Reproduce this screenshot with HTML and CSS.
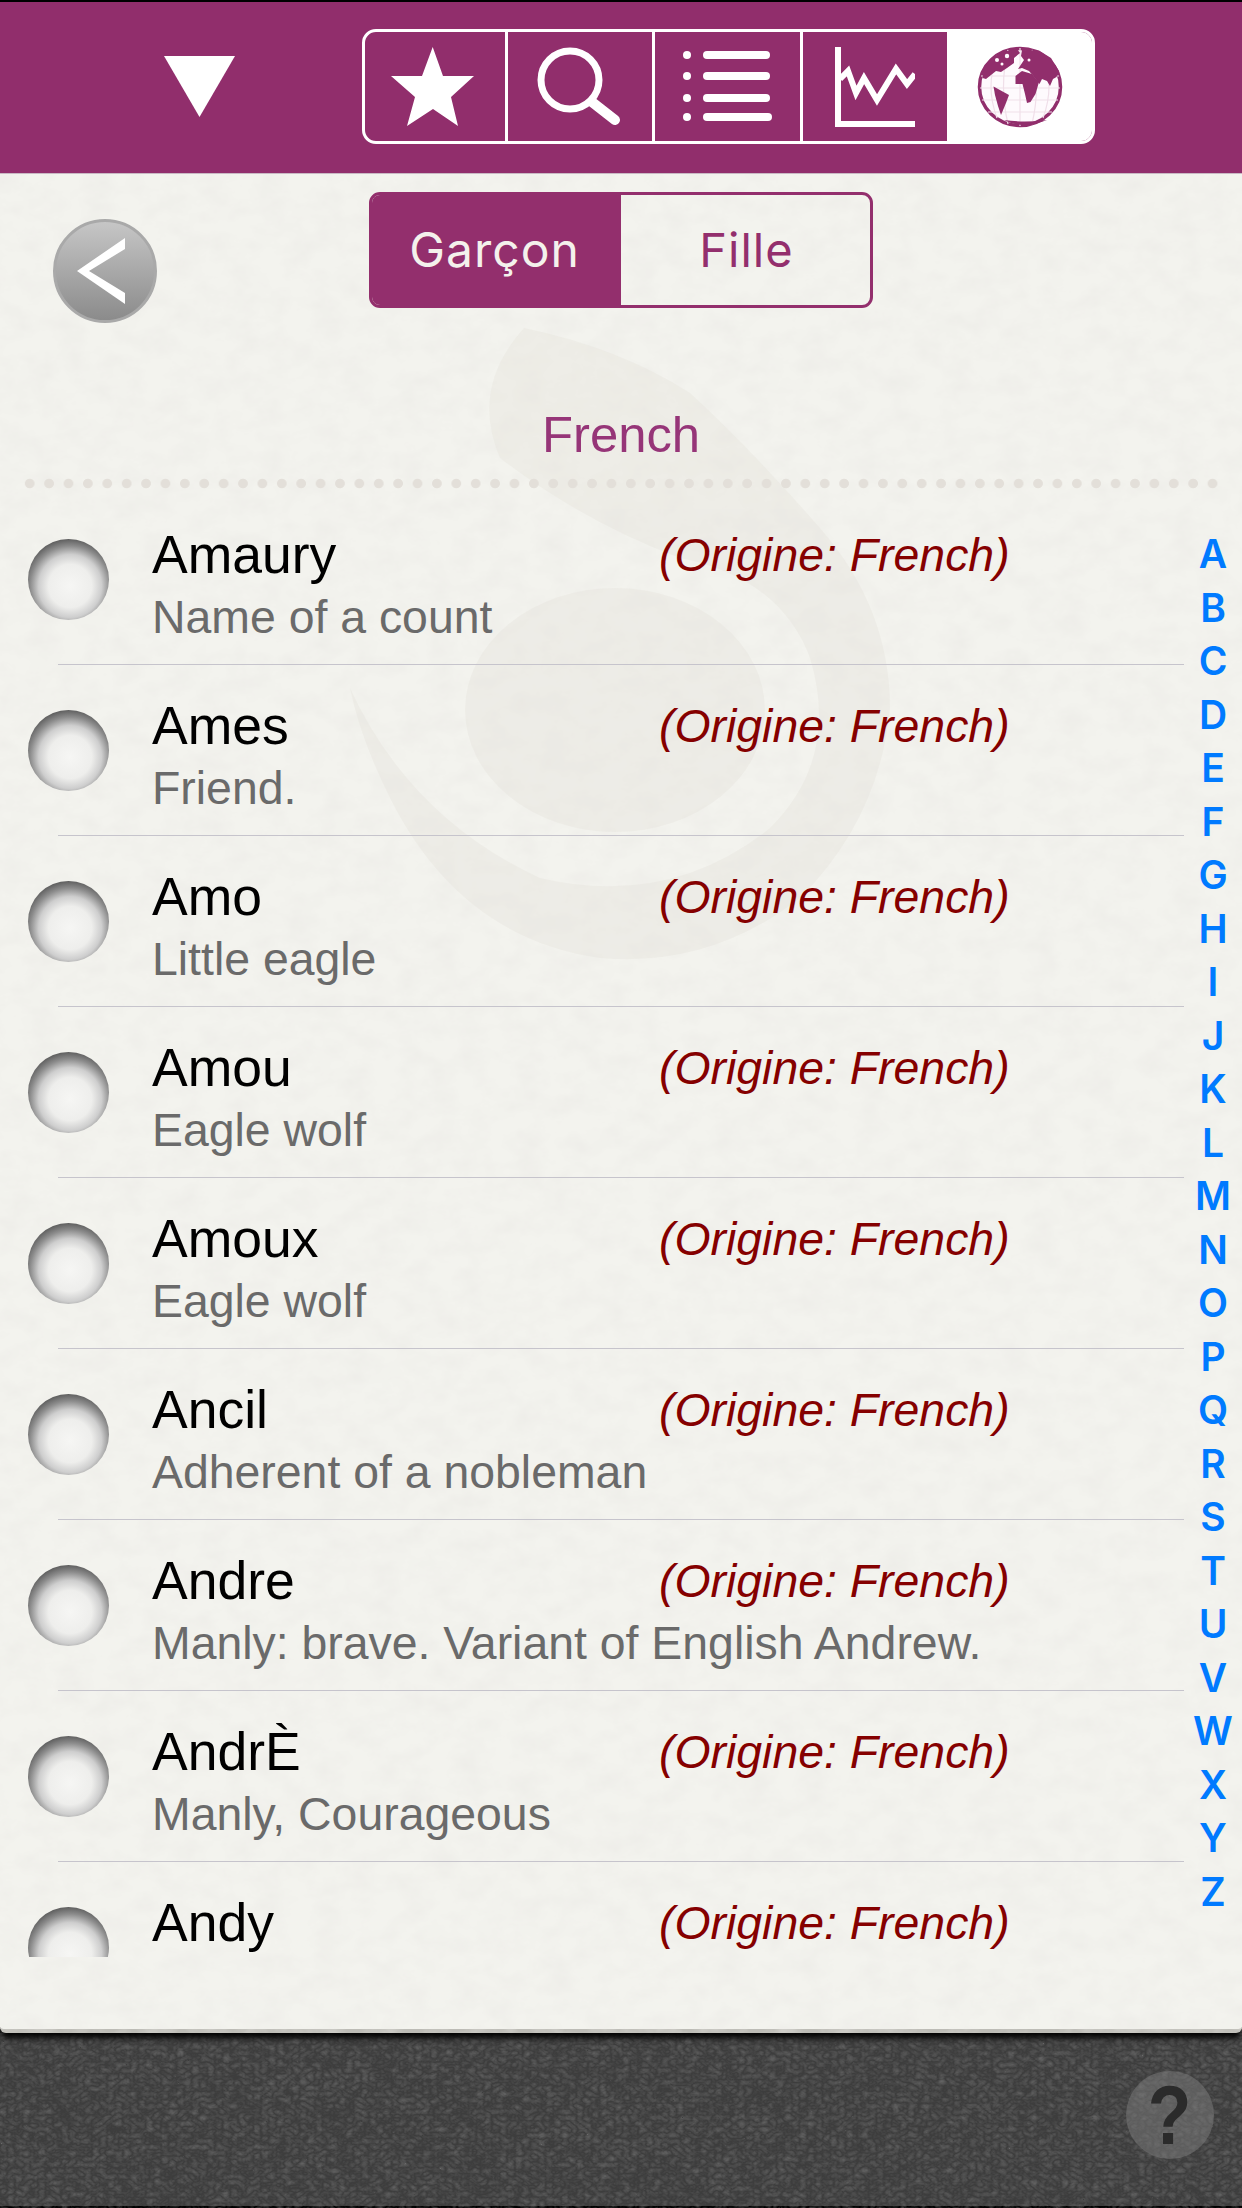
FILE: index.html
```html
<!DOCTYPE html>
<html lang="fr">
<head>
<meta charset="utf-8">
<title>Prénoms</title>
<link rel="stylesheet" href="styles.css">
</head>
<body>
<div class="page">
  <header class="topbar">
    <svg class="tri" width="71" height="61" viewBox="0 0 71 61"><polygon points="0,0 71,0 35.5,61" fill="#fff"/></svg>
    <nav class="tabs">
      <div class="tab t1">
        <svg class="star" width="84" height="80" viewBox="0 0 84 80"><polygon fill="#fff" points="41.7,0 52,29 83,29 60,50 67,79 42,62 16,79 24,50 0,29 31,29"/></svg>
      </div>
      <div class="tab t2">
        <svg width="86" height="80" viewBox="0 0 86 80"><circle cx="33" cy="33" r="29" fill="none" stroke="#fff" stroke-width="7"/><line x1="55" y1="55" x2="78" y2="73" stroke="#fff" stroke-width="10" stroke-linecap="round"/></svg>
      </div>
      <div class="tab t3">
        <svg width="90" height="72" viewBox="0 0 90 72"><g fill="#fff"><circle cx="4" cy="4" r="4"/><circle cx="4" cy="25" r="4"/><circle cx="4" cy="47" r="4"/><circle cx="4" cy="66" r="4"/><rect x="20" y="0" width="67" height="8" rx="4"/><rect x="20" y="21" width="67" height="8" rx="4"/><rect x="20" y="43" width="67" height="8" rx="4"/><rect x="20" y="62" width="69" height="8" rx="4"/></g></svg>
      </div>
      <div class="tab t4">
        <svg width="80" height="80" viewBox="0 0 80 80"><path d="M3 0V77H80" fill="none" stroke="#fff" stroke-width="6"/><path d="M5 32 L13 24 L21 46 L29 31 L42 53 L61 22 L72 37 L80 27" fill="none" stroke="#fff" stroke-width="6"/></svg>
      </div>
      <div class="tab t5">
        <svg width="86" height="82" viewBox="0 0 86 82">
          <ellipse cx="43" cy="41" rx="40.5" ry="38.5" fill="#fefafd" stroke="#912e6c" stroke-width="3.5"/>
          <g stroke="#f0dfe9" stroke-width="1.2" fill="none"><path d="M4 30H82M3 42H83M5 54H81M11 66H75"/><path d="M20 10Q8 40 20 72M43 2V80M66 10Q78 40 66 72M31 4Q22 40 31 78M55 4Q64 40 55 78"/></g>
          <g fill="#912e6c">
            <polygon points="5.5,32 7,22 13.5,14 25,6 40,3 43,7 37,12 37,17 30,22 24,26 19,25 14,29 9,33"/>
            <polygon points="45,4 62,4.5 74,12 82,25 79.5,31 76,33 73,40 70,35 65,33 62.5,38 58,32 52,25 45,22 41,23 47,14 44,10"/>
            <polygon points="38.5,30 45,25 55,28 62,36 58.5,48 53.5,56 50,57 48,48 45.5,38 38.5,38"/>
            <polygon points="16.5,40.5 32,49 29,57 24,69 21,60 18,49"/>
            <path d="M27 74Q45 84 70 74Q47 77 27 74Z"/>
          </g>
          <g fill="#fefafd"><circle cx="20" cy="14" r="2"/><circle cx="30" cy="10" r="2.2"/><circle cx="25" cy="18" r="1.5"/><circle cx="52" cy="14" r="1.5"/></g>
        </svg>
      </div>
    </nav>
  </header>

  <main class="card">
    <svg class="texture" width="1242" height="1859" aria-hidden="true">
      <filter id="paper" x="0" y="0" width="100%" height="100%">
        <feTurbulence type="fractalNoise" baseFrequency="0.035 0.05" numOctaves="4" seed="4"/>
        <feColorMatrix values="0 0 0 0 0.82  0 0 0 0 0.81  0 0 0 0 0.78  0.9 0 0 0 -0.32"/>
      </filter>
      <rect width="1242" height="1859" filter="url(#paper)"/>
    </svg>
    <svg class="mark" width="560" height="660" viewBox="0 0 560 660" aria-hidden="true">
      <g fill="#e4e1da" opacity=".34">
        <path d="M174 10Q270 30 340 75Q400 130 470 210Q540 290 540 390Q530 500 450 580Q360 650 250 640Q110 620 40 480Q10 420 0 370Q60 500 190 560Q320 590 420 510Q490 440 460 340Q430 260 330 240Q235 205 150 140Q120 70 174 10Z"/>
        <ellipse cx="265" cy="392" rx="150" ry="122"/>
      </g>
    </svg>

    <div class="controls">
      <button class="back" type="button" aria-label="Retour">
        <svg width="48" height="66" viewBox="0 0 48 66"><polygon points="48,0 48,11 12,33 48,55 48,66 0,33" fill="#fff"/></svg>
      </button>
      <div class="segment">
        <span class="seg on">Garçon</span>
        <span class="seg off">Fille</span>
      </div>
    </div>

    <h1 class="title">French</h1>
    <div class="dots"></div>

    <div class="content">
      <ul class="list">
        <li class="row"><span class="radio"></span><div class="txt"><div class="line"><span class="name">Amaury</span><span class="origin">(Origine: French)</span></div><div class="desc">Name of a count</div></div></li>
        <li class="row"><span class="radio"></span><div class="txt"><div class="line"><span class="name">Ames</span><span class="origin">(Origine: French)</span></div><div class="desc">Friend.</div></div></li>
        <li class="row"><span class="radio"></span><div class="txt"><div class="line"><span class="name">Amo</span><span class="origin">(Origine: French)</span></div><div class="desc">Little eagle</div></div></li>
        <li class="row"><span class="radio"></span><div class="txt"><div class="line"><span class="name">Amou</span><span class="origin">(Origine: French)</span></div><div class="desc">Eagle wolf</div></div></li>
        <li class="row"><span class="radio"></span><div class="txt"><div class="line"><span class="name">Amoux</span><span class="origin">(Origine: French)</span></div><div class="desc">Eagle wolf</div></div></li>
        <li class="row"><span class="radio"></span><div class="txt"><div class="line"><span class="name">Ancil</span><span class="origin">(Origine: French)</span></div><div class="desc">Adherent of a nobleman</div></div></li>
        <li class="row"><span class="radio"></span><div class="txt"><div class="line"><span class="name">Andre</span><span class="origin">(Origine: French)</span></div><div class="desc">Manly: brave. Variant of English Andrew.</div></div></li>
        <li class="row"><span class="radio"></span><div class="txt"><div class="line"><span class="name">AndrÈ</span><span class="origin">(Origine: French)</span></div><div class="desc">Manly, Courageous</div></div></li>
        <li class="row"><span class="radio"></span><div class="txt"><div class="line"><span class="name">Andy</span><span class="origin">(Origine: French)</span></div><div class="desc"></div></div></li>
      </ul>
      <ol class="index">
        <li>A</li><li>B</li><li>C</li><li>D</li><li>E</li><li>F</li><li>G</li><li>H</li><li>I</li><li>J</li><li>K</li><li>L</li><li>M</li><li>N</li><li>O</li><li>P</li><li>Q</li><li>R</li><li>S</li><li>T</li><li>U</li><li>V</li><li>W</li><li>X</li><li>Y</li><li>Z</li>
      </ol>
    </div>
  </main>

  <footer class="foot">
    <svg class="leather" width="1242" height="180" aria-hidden="true">
      <filter id="grain" x="0" y="0" width="100%" height="100%">
        <feTurbulence type="turbulence" baseFrequency="0.13 0.17" numOctaves="2" seed="7"/>
        <feColorMatrix values="0 0 0 0 0.17  0 0 0 0 0.17  0 0 0 0 0.17  0.9 0 0 0 -0.06"/>
      </filter>
      <rect width="1242" height="180" filter="url(#grain)"/>
    </svg>
    <span class="help"><span class="qmark">?</span></span>
  </footer>
</div>
</body>
</html>
```
FILE: styles.css
```css
* { box-sizing: border-box; }
html, body { margin: 0; padding: 0; }
body { background: #000; font-family: "Liberation Sans", Arial, sans-serif; }
.page { width: 1242px; height: 2208px; display: flex; flex-direction: column; padding: 2px 0; overflow: hidden; }

.topbar { height: 172px; flex: none; background: #912e6c; display: flex; align-items: flex-start; border-bottom: 1px solid #c9b9c4; }
.tri { margin: 54px 0 0 164px; flex: none; }
.tabs { margin: 27px 0 0 127px; width: 733px; height: 115px; display: flex; border: 3px solid #fff; border-radius: 14px; overflow: hidden; flex: none; }
.tab { height: 100%; display: flex; align-items: center; justify-content: center; border-right: 3px solid #fff; flex: none; }
.t1 { width: 143px; }
.t2 { width: 147px; }
.t3 { width: 148px; }
.t4 { width: 144px; border-right: 0; }
.t5 { flex: 1; background: #fff; border-right: 0; }
.star { margin-right: 4px; }

.card { position: relative; flex: none; height: 1859px; background: #f3f3ee; border-bottom: 4px solid #bdbcb6; border-radius: 0 0 6px 6px; box-shadow: 0 7px 6px -2px #000; z-index: 1; }
.texture { position: absolute; left: 0; top: 0; }
.mark { position: absolute; left: 350px; top: 144px; }
.controls, .title, .dots, .content { position: relative; }

.controls { display: grid; grid-template-columns: 1fr 504px 1fr; padding-top: 18px; height: 134px; }
.back { grid-column: 1; justify-self: start; width: 104px; height: 104px; margin: 27px 0 0 53px; padding: 0 8px 0 0; border: 3px solid #a9a9a9; border-radius: 50%; background: linear-gradient(#c6c6c6, #8b8b8b); display: flex; align-items: center; justify-content: center; }
.segment { grid-column: 2; height: 116px; display: flex; border: 3px solid #932f6d; border-radius: 11px; overflow: hidden; }
.seg { width: 50%; display: flex; align-items: center; justify-content: center; font-family: Inter, "Liberation Sans", sans-serif; font-size: 47px; letter-spacing: 1px; color: #932f6d; padding-bottom: 2px; }
.seg.on { background: #932f6d; color: #f4f1ec; font-size: 48px; padding-right: 4px; }
.seg.off { padding-left: 2px; }

.title { margin: 107px 0 0; height: 40px; font-weight: 400; font-size: 50.8px; line-height: 40px; text-align: center; color: #963578; }
.dots { height: 11px; margin: 23px 19px 0 20px; background-image: radial-gradient(circle at center, #e3dfd9 4.4px, transparent 5.2px); background-size: 19.4px 11px; background-repeat: repeat-x; }

.content { display: flex; height: 1463px; margin-top: 5px; }
.list { list-style: none; margin: 0; padding: 0; width: 1190px; height: 1463px; overflow: hidden; }
.row { position: relative; height: 171px; display: flex; align-items: center; padding-left: 28px; }
.row::after { content: ""; position: absolute; left: 58px; right: 6px; bottom: 0; height: 1px; background: #c6c4cc; }
.radio { width: 81px; height: 81px; flex: none; border-radius: 50%; background: radial-gradient(circle 47px at 52% 58%, #f6f6f4 0, #eeeeec 46%, #cecece 67%, #8c8c8c 85%, #5f5f5f 100%); }
.txt { margin-left: 43px; flex: 1; align-self: flex-start; padding-top: 30px; }
.line { display: flex; align-items: flex-start; height: 61px; }
.name { font-size: 53.5px; line-height: 61px; color: #000; width: 507px; flex: none; }
.origin { font-size: 46.4px; line-height: 62px; font-style: italic; color: #850000; }
.desc { font-size: 46.4px; line-height: 58px; color: #6a6a6a; white-space: nowrap; padding-top: 3px; }

.index { list-style: none; margin: 33px 0 0; padding: 0 6px 0 0; width: 52px; flex: none; display: flex; flex-direction: column; }
.index li { height: 53.5px; line-height: 53.5px; text-align: center; font-family: Inter, "Liberation Sans", sans-serif; font-weight: 600; font-size: 39px; color: #007aff; }

.foot { position: relative; flex: 1; min-height: 0; background: #3d3d3d; }
.leather { position: absolute; left: 0; top: 0; }
.help { position: absolute; right: 28px; top: 38px; width: 88px; height: 88px; border-radius: 50%; background: rgba(125,125,125,.5); display: flex; align-items: center; justify-content: center; }
.qmark { display: block; transform: scaleX(.85); font-weight: 700; font-size: 84px; line-height: 84px; color: #2b2b2b; font-family: "Liberation Sans", sans-serif; }
```
